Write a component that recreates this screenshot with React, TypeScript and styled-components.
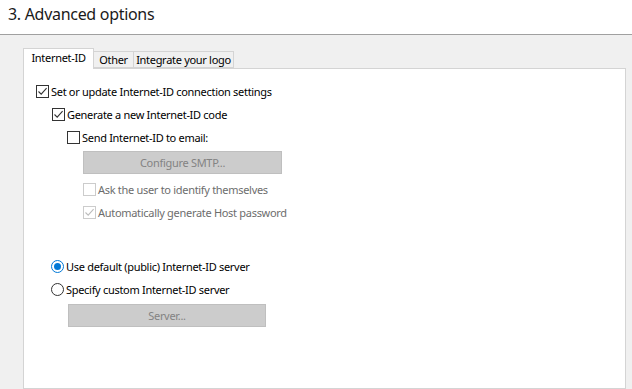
import React, { useState } from "react";
import styled, { createGlobalStyle } from "styled-components";

const GlobalStyle = createGlobalStyle`
  html, body {
    margin: 0;
    padding: 0;
    background: #f0f0f0;
  }
  body {
    font-family: "Noto Sans", "Liberation Sans", sans-serif;
    font-size: 11px;
    letter-spacing: -0.3px;
    color: #000;
  }
`;

const tabs = [
  { title: "Internet-ID", width: 71 },
  { title: "Other", width: 41 },
  { title: "Integrate your logo", width: 101 },
];

const App: React.FC = () => {
  const [activeTab, setActiveTab] = useState(0);
  const [server, setServer] = useState<"default" | "custom">("default");

  return (
    <Page>
      <GlobalStyle />
      <Header>3. Advanced options</Header>
      <Body>
        <TabBar>
          {tabs.map((t, i) => (
            <Tab
              key={t.title}
              $active={i === activeTab}
              $width={t.width}
              onClick={() => setActiveTab(i)}
            >
              {t.title}
            </Tab>
          ))}
        </TabBar>
        <Panel>
          <Row $indent={0}>
            <CheckBox checked />
            <Label>Set or update Internet-ID connection settings</Label>
          </Row>
          <Row $indent={16}>
            <CheckBox checked />
            <Label>Generate a new Internet-ID code</Label>
          </Row>
          <Row $indent={31}>
            <CheckBox />
            <Label>Send Internet-ID to email:</Label>
          </Row>
          <ButtonRow $indent={47} $top={-3}>
            <DisabledButton $width={199}>Configure SMTP...</DisabledButton>
          </ButtonRow>
          <Row $indent={47} $top={9}>
            <CheckBox disabled />
            <Label $disabled>Ask the user to identify themselves</Label>
          </Row>
          <Row $indent={47}>
            <CheckBox checked disabled />
            <Label $disabled>Automatically generate Host password</Label>
          </Row>
          <Row $indent={15} $top={31}>
            <Radio checked={server === "default"} onClick={() => setServer("default")} />
            <Label>Use default (public) Internet-ID server</Label>
          </Row>
          <Row $indent={15}>
            <Radio checked={server === "custom"} onClick={() => setServer("custom")} />
            <Label>Specify custom Internet-ID server</Label>
          </Row>
          <ButtonRow $indent={32} $top={-2}>
            <DisabledButton $width={198}>Server...</DisabledButton>
          </ButtonRow>
        </Panel>
      </Body>
    </Page>
  );
};

const CheckBox: React.FC<{ checked?: boolean; disabled?: boolean }> = ({
  checked,
  disabled,
}) => (
  <Box $disabled={disabled}>
    {checked && (
      <svg width="11" height="11" viewBox="0 0 11 11">
        <path
          d="M1.5 5.5 L4.2 8.2 L9.6 2.2"
          fill="none"
          stroke={disabled ? "#bcbcbc" : "#333"}
          strokeWidth="1.1"
        />
      </svg>
    )}
  </Box>
);

const Radio: React.FC<{ checked?: boolean; onClick?: () => void }> = ({
  checked,
  onClick,
}) => (
  <RadioCircle $checked={checked} onClick={onClick}>
    {checked && <RadioDot />}
  </RadioCircle>
);

const Page = styled.div`
  width: 632px;
  height: 389px;
  overflow: hidden;
  display: flex;
  flex-direction: column;
`;

const Header = styled.div`
  height: 34px;
  flex-shrink: 0;
  background: #fff;
  border-bottom: 1px solid #a0a0a0;
  padding-left: 8px;
  font-size: 16px;
  letter-spacing: -0.3px;
  line-height: 29px;
  color: #1a1a1a;
`;

const Body = styled.div`
  flex: 1;
  display: flex;
  flex-direction: column;
  padding: 13px 6px 0 23px;
  background: #f0f0f0;
`;

const TabBar = styled.div`
  display: flex;
  align-items: flex-end;
  height: 20px;
  position: relative;
  z-index: 1;
`;

const Tab = styled.div<{ $active?: boolean; $width: number }>`
  box-sizing: border-box;
  width: ${(p) => p.$width}px;
  height: ${(p) => (p.$active ? 21 : 17)}px;
  margin-bottom: ${(p) => (p.$active ? -1 : 0)}px;
  margin-left: ${(p) => (p.$active ? 0 : -1)}px;
  background: ${(p) => (p.$active ? "#fff" : "#f0f0f0")};
  border: 1px solid #d4d4d4;
  border-bottom: ${(p) => (p.$active ? "none" : "1px solid #d4d4d4")};
  line-height: ${(p) => (p.$active ? 17 : 16)}px;
  text-align: center;
  color: #000;
  cursor: default;
  white-space: nowrap;
`;

const Panel = styled.div`
  flex: 1;
  background: #fff;
  border: 1px solid #d4d4d4;
  padding: 16px 0 0 12px;
  display: flex;
  flex-direction: column;
`;

const Row = styled.div<{ $indent: number; $top?: number }>`
  display: flex;
  align-items: center;
  height: 13px;
  margin-left: ${(p) => p.$indent}px;
  margin-top: ${(p) => p.$top ?? 0}px;
  margin-bottom: 10px;
  gap: 2px;
`;

const ButtonRow = styled.div<{ $indent: number; $top?: number }>`
  display: flex;
  margin-left: ${(p) => p.$indent}px;
  margin-top: ${(p) => p.$top ?? 0}px;
`;

const Label = styled.span<{ $disabled?: boolean }>`
  line-height: 13px;
  white-space: nowrap;
  color: ${(p) => (p.$disabled ? "#6d6d6d" : "#000")};
`;

const Box = styled.div<{ $disabled?: boolean }>`
  box-sizing: border-box;
  width: 13px;
  height: 13px;
  flex-shrink: 0;
  border: 1px solid ${(p) => (p.$disabled ? "#cccccc" : "#333")};
  background: #fff;
  display: flex;
  align-items: center;
  justify-content: center;
`;

const RadioCircle = styled.div<{ $checked?: boolean }>`
  box-sizing: border-box;
  width: 13px;
  height: 13px;
  flex-shrink: 0;
  border-radius: 50%;
  border: 1px solid ${(p) => (p.$checked ? "#0078d7" : "#333")};
  background: #fff;
  display: flex;
  align-items: center;
  justify-content: center;
`;

const RadioDot = styled.div`
  width: 7px;
  height: 7px;
  border-radius: 50%;
  background: #0078d7;
`;

const DisabledButton = styled.div<{ $width: number }>`
  box-sizing: border-box;
  width: ${(p) => p.$width}px;
  height: 23px;
  background: #cccccc;
  border: 1px solid #bfbfbf;
  color: #838383;
  line-height: 21px;
  text-align: center;
`;

export default App;
